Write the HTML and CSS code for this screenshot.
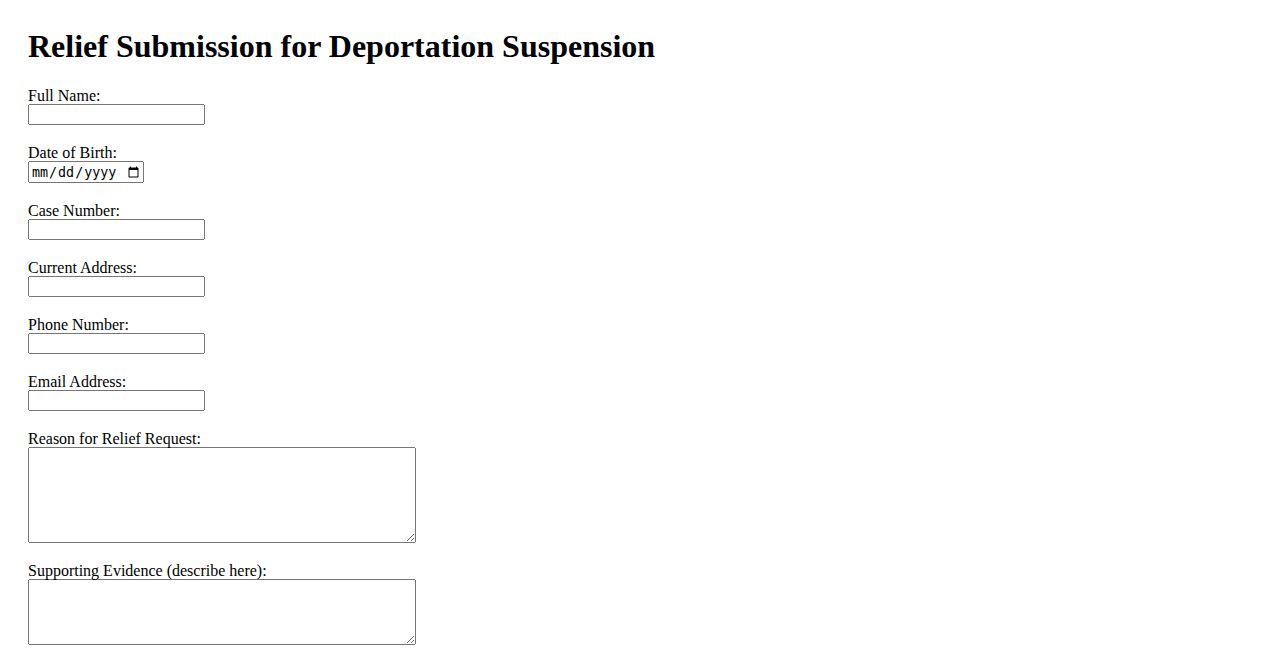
FILE: index.html
```html
<!DOCTYPE html>
<html lang="en">
<head>
<meta charset="utf-8">
<title>Relief Submission for Deportation Suspension</title>
<link rel="stylesheet" href="styles.css">
</head>
<body>
<div class="page">
  <h1 class="title">Relief Submission for Deportation Suspension</h1>
  <form class="form">
    <div class="field">
      <label class="label" for="name">Full Name:</label>
      <input class="text-input" type="text" id="name">
    </div>
    <div class="field">
      <label class="label" for="dob">Date of Birth:</label>
      <input class="date-input" type="date" id="dob">
    </div>
    <div class="field">
      <label class="label" for="case">Case Number:</label>
      <input class="text-input" type="text" id="case">
    </div>
    <div class="field">
      <label class="label" for="addr">Current Address:</label>
      <input class="text-input" type="text" id="addr">
    </div>
    <div class="field">
      <label class="label" for="phone">Phone Number:</label>
      <input class="text-input" type="tel" id="phone">
    </div>
    <div class="field">
      <label class="label" for="email">Email Address:</label>
      <input class="text-input" type="email" id="email">
    </div>
    <div class="field">
      <label class="label" for="reason">Reason for Relief Request:</label>
      <textarea class="area area-tall" id="reason"></textarea>
    </div>
    <div class="field">
      <label class="label" for="evidence">Supporting Evidence (describe here):</label>
      <textarea class="area area-short" id="evidence"></textarea>
    </div>
  </form>
</div>
</body>
</html>
```

FILE: styles.css
```css
html, body {
  margin: 0;
  padding: 0;
  background: #fff;
}

body {
  font-family: "Liberation Serif", "Times New Roman", serif;
  font-size: 16px;
  color: #000;
}

.page {
  padding: 28px;
}

.title {
  font-size: 32px;
  font-weight: bold;
  margin: 0 0 21.44px 0;
  line-height: 37px;
}

.form {
  margin: 0;
}

.field {
  margin-bottom: 18px;
}

.label {
  display: block;
  line-height: 18px;
  padding-top: 1px;
  height: 17px;
  overflow: visible;
}

.text-input,
.date-input,
.area {
  display: block;
  box-sizing: border-box;
  margin: 0;
}

.text-input {
  width: 177px;
  height: 21px;
}

.date-input {
  width: 116px;
  height: 22px;
}

.area {
  width: 388px;
}

.area-tall {
  height: 96px;
}

.area-short {
  height: 66px;
}
```
